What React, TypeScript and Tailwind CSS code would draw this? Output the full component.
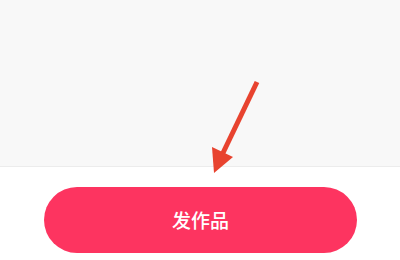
import React from "react";

const Arrow = () => (
  <svg
    className="absolute left-0 top-0 pointer-events-none"
    width="400"
    height="260"
    viewBox="0 0 400 260"
  >
    <line x1="257" y1="82" x2="222" y2="155" stroke="#e8432f" strokeWidth="5" />
    <polygon points="214,173 233,157 212,147" fill="#e8432f" />
  </svg>
);

export default function App() {
  return (
    <div className="relative w-[400px] h-[260px] overflow-hidden bg-white" style={{ fontFamily: '"Noto Sans CJK SC", "Noto Sans", sans-serif' }}>
      <div className="h-[167px] bg-[#f8f8f8] border-b border-[#ececec]" />
      <div className="pl-[44px] pr-[43px] pt-[20px]">
        <button className="w-full h-[66px] rounded-full bg-[#fd3460] text-white text-[19px] font-medium flex items-center justify-center">
          发作品
        </button>
      </div>
      <Arrow />
    </div>
  );
}
